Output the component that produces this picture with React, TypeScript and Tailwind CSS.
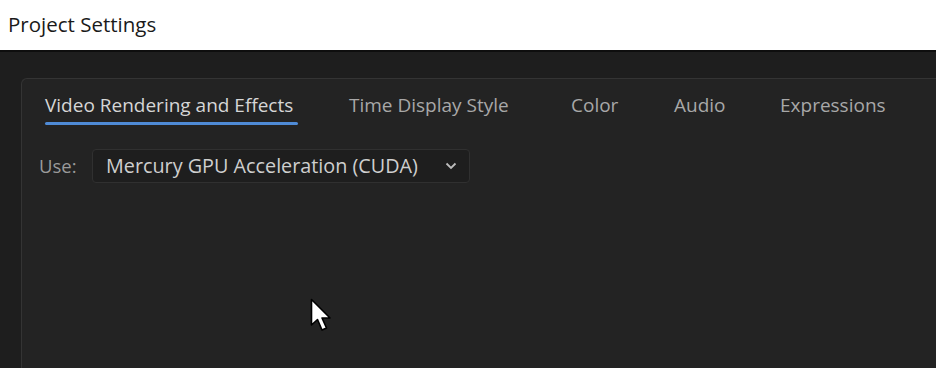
import React from "react";

export default function App() {
  const tabs = [
    { label: "Video Rendering and Effects", active: true, w: "w-[304px]" },
    { label: "Time Display Style", w: "w-[222px]" },
    { label: "Color", w: "w-[103px]" },
    { label: "Audio", w: "w-[106px]" },
    { label: "Expressions", w: "w-[140px]" },
  ];
  return (
    <div className="w-[936px] h-[368px] overflow-hidden flex flex-col bg-[#1e1e1e]" style={{ fontFamily: '"Open Sans", "Noto Sans", sans-serif' }}>
      <div className="h-[52px] shrink-0 bg-white flex items-center pl-[8px] pb-[2px] text-[20.5px] text-[#1a1a1a] border-b-2 border-[#0e0e0e]">
        Project Settings
      </div>
      <div className="flex-1 pt-[26px] pl-[21px]">
        <div className="relative h-full bg-[#232323] border-t border-l border-[#343434] rounded-tl-[6px] pl-[23px]">
          <div className="flex items-start h-[48px] pt-[12px] text-[19px] text-[#a8a8a8]">
            {tabs.map((t, i) => (
              <div key={i} className={"shrink-0 " + t.w}>
                <div className="inline-flex flex-col">
                  <span className={t.active ? "text-[#d6d6d6] leading-[28px]" : "leading-[28px]"}>{t.label}</span>
                  {t.active && <div className="mt-[3px] -mr-[5px] h-[3px] rounded-full bg-[#4f8bd6]" />}
                </div>
              </div>
            ))}
          </div>
          <div className="flex items-center mt-[22px] ml-[-6px]">
            <span className="text-[18.5px] text-[#9a9a9a] w-[53px]">Use:</span>
            <div className="w-[378px] h-[34px] rounded-[4px] bg-[#1e1e1e] border border-[#303030] flex items-center pl-[13px] pr-[12px] text-[19.8px] text-[#cfcfcf]">
              <span className="flex-1">Mercury GPU Acceleration (CUDA)</span>
              <svg width="12" height="8" viewBox="0 0 12 8" fill="none">
                <path d="M1.5 1.5 L6 6 L10.5 1.5" stroke="#bdbdbd" strokeWidth="1.8" />
              </svg>
            </div>
          </div>
          <svg className="absolute left-[288px] top-[219px]" width="24" height="36" viewBox="0 0 24 36">
            <path d="M1.5 1.5 L1.5 27 L7.5 21.5 L12 32 L16.5 30 L12 20 L20 20 Z" fill="#ffffff" stroke="#000000" strokeWidth="1.6" strokeLinejoin="round" />
          </svg>
        </div>
      </div>
    </div>
  );
}
